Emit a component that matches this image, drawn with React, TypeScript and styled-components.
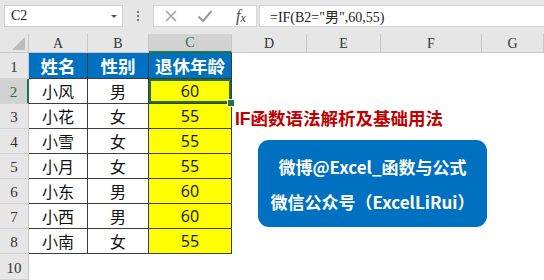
import { Fragment } from 'react';
import styled, { createGlobalStyle } from 'styled-components';

const GlobalStyle = createGlobalStyle`
  html, body {
    margin: 0;
    padding: 0;
    background: #ffffff;
    overflow: hidden;
  }
  * {
    box-sizing: border-box;
  }
`;

const GREEN = '#217346';
const CJK = `"Noto Sans CJK SC", "Noto Sans", sans-serif`;
const SERIF = `"Liberation Serif", "Noto Sans CJK SC", serif`;

const Page = styled.div`
  width: 544px;
  height: 280px;
  display: flex;
  flex-direction: column;
  background: #ffffff;
`;

const Toolbar = styled.div`
  height: 34px;
  flex: none;
  display: flex;
  align-items: flex-start;
  padding: 5px 0 0 4px;
  background: #e6e6e6;
`;

const NameBox = styled.div`
  width: 119px;
  height: 22px;
  display: flex;
  align-items: center;
  justify-content: space-between;
  padding: 0 5px 0 6px;
  background: #ffffff;
  border: 1px solid #d0d0d0;
  font-family: ${SERIF};
  font-size: 14px;
  color: #222;
`;

const Caret = styled.span`
  width: 0;
  height: 0;
  border-left: 3px solid transparent;
  border-right: 3px solid transparent;
  border-top: 3px solid #555;
`;

const Grip = styled.div`
  width: 30px;
  height: 22px;
  display: flex;
  flex-direction: column;
  align-items: center;
  justify-content: center;
  gap: 2px;
`;

const GripDot = styled.span`
  width: 2px;
  height: 2px;
  background: #777;
`;

const FxButtons = styled.div`
  width: 104px;
  height: 22px;
  display: flex;
  align-items: center;
  background: #ffffff;
  border: 1px solid #d6d6d6;
`;

const FxButton = styled.div`
  flex: 1;
  display: flex;
  align-items: center;
  justify-content: center;
  height: 100%;
`;

const FxLabel = styled.span`
  font-family: ${SERIF};
  font-style: italic;
  font-size: 16px;
  color: #444;
  padding-left: 4px;

  sub {
    font-size: 12px;
    vertical-align: -1px;
  }
`;

const FormulaInput = styled.div`
  flex: 1;
  height: 22px;
  margin-left: 2px;
  display: flex;
  align-items: center;
  padding-left: 10px;
  background: #ffffff;
  border: 1px solid #d6d6d6;
  border-right: none;
  font-family: ${SERIF};
  font-size: 14px;
  color: #222;
  white-space: pre;
`;

const Sheet = styled.div`
  position: relative;
  flex: 1;
  display: grid;
  grid-template-columns: 29px 59px 61px 83px 75px 74px 101px 1fr;
  grid-template-rows: 19px 26px repeat(7, 25px) 1fr;
`;

const Corner = styled.div`
  background: #e6e6e6;
  border-right: 1px solid #c8c8c8;
  border-bottom: 1px solid #c8c8c8;
  display: flex;
  align-items: flex-end;
  justify-content: flex-end;
  padding: 0 3px 2px 0;
`;

const CornerTriangle = styled.span`
  width: 0;
  height: 0;
  border-left: 13px solid transparent;
  border-bottom: 13px solid #bcbcbc;
`;

const ColHeader = styled.div<{ $active?: boolean }>`
  display: flex;
  align-items: center;
  justify-content: center;
  background: ${({ $active }) => ($active ? '#d2d2d2' : '#e6e6e6')};
  color: ${({ $active }) => ($active ? GREEN : '#333')};
  border-right: 1px solid #c8c8c8;
  border-bottom: ${({ $active }) => ($active ? `2px solid ${GREEN}` : '1px solid #c8c8c8')};
  font-family: ${SERIF};
  font-size: 14px;
  padding-top: 1px;
`;

const RowHeader = styled.div<{ $active?: boolean }>`
  display: flex;
  align-items: center;
  justify-content: center;
  background: ${({ $active }) => ($active ? '#d2d2d2' : '#e6e6e6')};
  color: ${({ $active }) => ($active ? GREEN : '#333')};
  border-right: ${({ $active }) => ($active ? `2px solid ${GREEN}` : '1px solid #c8c8c8')};
  border-bottom: 1px solid #d4d4d4;
  font-family: ${SERIF};
  font-size: 15px;
  padding-top: 3px;
`;

type CellKind = 'title' | 'text' | 'value';

const Cell = styled.div<{ $kind: CellKind; $selected?: boolean }>`
  position: relative;
  display: flex;
  align-items: center;
  justify-content: center;
  border-right: 1px solid #3c3c3c;
  border-bottom: 1px solid #3c3c3c;
  background: ${({ $kind }) =>
    $kind === 'title' ? '#0070c0' : $kind === 'value' ? '#ffff00' : '#ffffff'};
  color: ${({ $kind }) => ($kind === 'title' ? '#ffffff' : '#111')};
  font-family: ${({ $kind }) => ($kind === 'value' ? `"Open Sans", ${CJK}` : CJK)};
  font-size: ${({ $kind }) => ($kind === 'title' ? '17.5px' : '16px')};
  font-weight: ${({ $kind }) => ($kind === 'title' ? 700 : 400)};
  box-shadow: ${({ $selected }) => ($selected ? `inset 0 0 0 2px ${GREEN}` : 'none')};

  &::after {
    content: '';
    display: ${({ $selected }) => ($selected ? 'block' : 'none')};
    position: absolute;
    right: -4px;
    bottom: -4px;
    width: 6px;
    height: 6px;
    background: ${GREEN};
    border: 1px solid #ffffff;
    z-index: 2;
  }
`;

const Blank = styled.div``;

const Title = styled.div`
  position: absolute;
  left: 235px;
  top: 74px;
  line-height: 22px;
  font-family: "Liberation Sans", ${CJK};
  font-size: 17.5px;
  font-weight: 700;
  color: #c00000;
  white-space: nowrap;
`;

const Badge = styled.div`
  position: absolute;
  left: 258px;
  top: 106px;
  width: 229px;
  height: 87px;
  padding-top: 9px;
  border-radius: 11px;
  background: #0070c0;
  display: flex;
  flex-direction: column;
  align-items: center;
  font-family: ${CJK};
  font-size: 17px;
  font-weight: 700;
  line-height: 35px;
  color: #ffffff;
  white-space: nowrap;
`;

const XIcon = () => (
  <svg width="14" height="14" viewBox="0 0 14 14">
    <path d="M2 2L12 12M12 2L2 12" stroke="#9a9a9a" strokeWidth="1.3" fill="none" />
  </svg>
);

const CheckIcon = () => (
  <svg width="16" height="14" viewBox="0 0 16 14">
    <path d="M1.5 7.5L6 12L14.5 2" stroke="#9a9a9a" strokeWidth="2" fill="none" />
  </svg>
);

const people: [string, string, number][] = [
  ['小风', '男', 60],
  ['小花', '女', 55],
  ['小雪', '女', 55],
  ['小月', '女', 55],
  ['小东', '男', 60],
  ['小西', '男', 60],
  ['小南', '女', 55],
];

const columns = ['A', 'B', 'C', 'D', 'E', 'F', 'G'];

export default function App() {
  return (
    <Page>
      <GlobalStyle />
      <Toolbar>
        <NameBox>
          C2
          <Caret />
        </NameBox>
        <Grip>
          <GripDot />
          <GripDot />
          <GripDot />
        </Grip>
        <FxButtons>
          <FxButton>
            <XIcon />
          </FxButton>
          <FxButton>
            <CheckIcon />
          </FxButton>
          <FxButton>
            <FxLabel>
              f<sub>x</sub>
            </FxLabel>
          </FxButton>
        </FxButtons>
        <FormulaInput>=IF(B2="男",60,55)</FormulaInput>
      </Toolbar>

      <Sheet>
        <Corner>
          <CornerTriangle />
        </Corner>
        {columns.map((c) => (
          <ColHeader key={c} $active={c === 'C'}>
            {c}
          </ColHeader>
        ))}

        <RowHeader>1</RowHeader>
        <Cell $kind="title">姓名</Cell>
        <Cell $kind="title">性别</Cell>
        <Cell $kind="title">退休年龄</Cell>
        <Blank />
        <Blank />
        <Blank />
        <Blank />

        {people.map(([name, sex, age], i) => (
          <Fragment key={name}>
            <RowHeader $active={i === 0}>{i + 2}</RowHeader>
            <Cell $kind="text">{name}</Cell>
            <Cell $kind="text">{sex}</Cell>
            <Cell $kind="value" $selected={i === 0}>
              {age}
            </Cell>
            <Blank />
            <Blank />
            <Blank />
            <Blank />
          </Fragment>
        ))}

        <RowHeader>10</RowHeader>

        <Title>IF函数语法解析及基础用法</Title>
        <Badge>
          <span>微博@Excel_函数与公式</span>
          <span>微信公众号（ExcelLiRui）</span>
        </Badge>
      </Sheet>
    </Page>
  );
}
